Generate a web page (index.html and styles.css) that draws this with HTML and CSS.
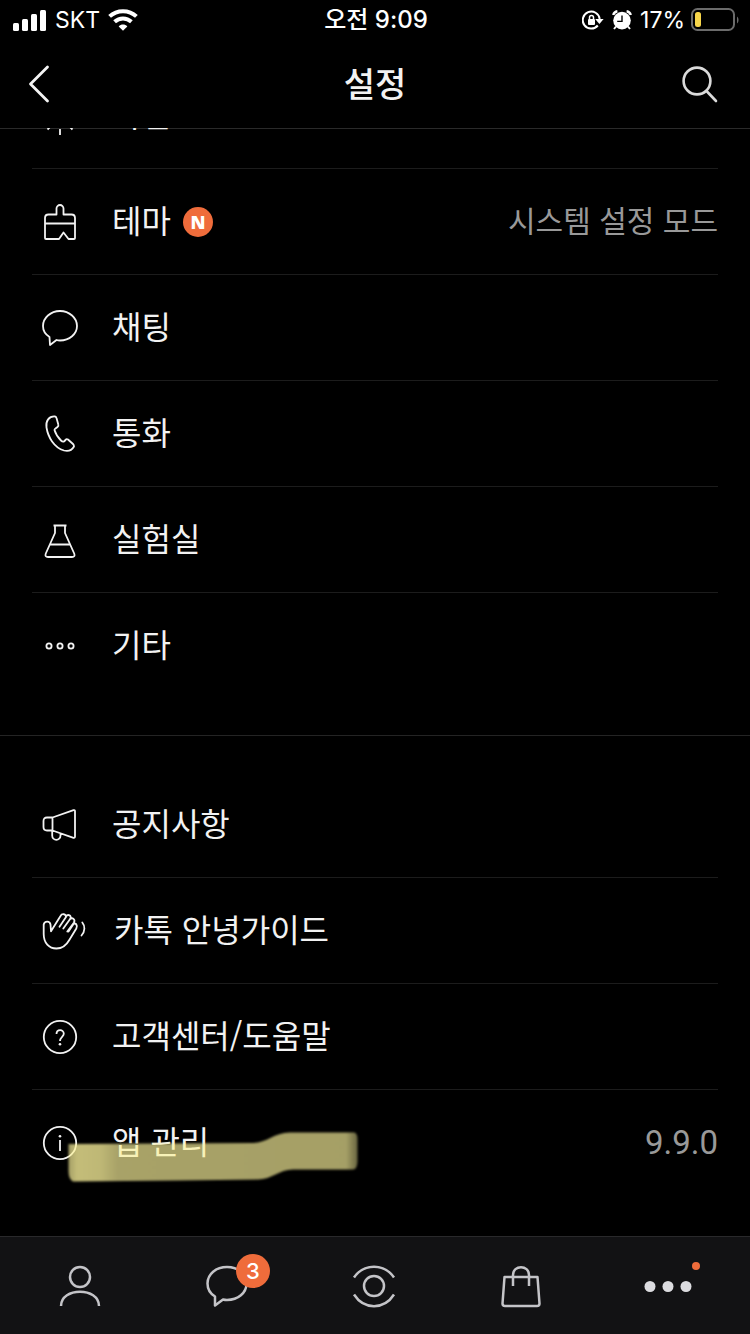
FILE: index.html
```html
<!DOCTYPE html>
<html lang="ko">
<head>
    <meta charset="UTF-8">
    <meta name="viewport" content="width=device-width, initial-scale=1.0">
    <title>설정</title>
    <link rel="stylesheet" href="styles.css">
</head>
<body>

<!-- Status bar -->
<div class="status-bar">
    <div class="status-left">
        <svg width="34" height="22" viewBox="0 0 34 22" fill="#fff">
            <rect x="0" y="14" width="6" height="8" rx="1.5"/>
            <rect x="9" y="10" width="6" height="12" rx="1.5"/>
            <rect x="18" y="5" width="6" height="17" rx="1.5"/>
            <rect x="27" y="1" width="6" height="21" rx="1.5"/>
        </svg>
        <span>SKT</span>
        <svg width="30" height="22" viewBox="0 0 30 22" fill="none" stroke="#fff" stroke-width="4">
            <path d="M1.6 7.4C9 .4 21 .4 28.4 7.4"/>
            <path d="M6.6 12.8C11.5 8.4 18.5 8.4 23.4 12.8"/>
            <path d="M10.7 17.4C13 15 17 15 19.3 17.4L15 21.8z" fill="#fff" stroke="none"/>
        </svg>
    </div>
    <div class="status-time">오전 9:09</div>
    <div class="status-right">
        <svg width="22" height="20" viewBox="0 0 22 20" fill="none" stroke="#fff" stroke-width="2">
            <path d="M15.8 15.500A8.500 8.500 0 1 1 17.700 9"/>
            <path d="M13.200 9h8.400l-4.200 5z" fill="#fff" stroke="none"/>
            <rect x="6" y="9" width="7" height="6" rx="1" fill="#fff" stroke="none"/>
            <path d="M7.500 9V7.500a2 2 0 0 1 4 0V9" stroke-width="1.500"/>
        </svg>
        <svg width="20" height="20" viewBox="0 0 20 20">
            <g fill="none" stroke="#fff" stroke-width="2.400">
                <path d="M1.200 5C1.800 3 3.400 1.600 5.400 1.300M18.800 5C18.200 3 16.600 1.600 14.600 1.300"/>
                <path d="M4 16.500L2 19M16 16.500L18 19" stroke-width="2"/>
            </g>
            <circle cx="10" cy="10.600" r="8.800" fill="#fff"/>
            <path d="M10 5.400v6H5.200" fill="none" stroke="#000" stroke-width="1.400"/>
        </svg>
        <span>17%</span>
        <svg class="battery" width="48" height="24" viewBox="0 0 48 24">
            <rect x="1" y="1" width="42" height="21" rx="5.500" fill="none" stroke="#6b6b6b" stroke-width="2"/>
            <rect x="4" y="4" width="6" height="15" rx="2.500" fill="#f8d64a"/>
            <path d="M46 8.500v7c2-1.400 2-5.600 0-7z" fill="#6b6b6b"/>
        </svg>
    </div>
</div>

<header class="header">
    <button class="header-btn" type="button" aria-label="뒤로">
        <svg width="24" height="40" viewBox="1 0 24 40" fill="none" stroke="#f4f4f4" stroke-width="2.800" stroke-linecap="round" stroke-linejoin="round">
            <path d="M20.500 3L3.500 20L20.500 37"/>
        </svg>
    </button>
    <h1>설정</h1>
    <button class="header-btn" type="button" aria-label="검색">
        <svg width="40" height="38" viewBox="0 0 40 38" fill="none" stroke="#dadada" stroke-width="2.600" stroke-linecap="round">
            <circle cx="15" cy="16" r="13.400"/>
            <path d="M24.500 26L34 36"/>
        </svg>
    </button>
</header>

<main class="content">
    <section class="group group-scrolled">
        <a class="row" href="#">
            <svg class="icon" viewBox="0 0 36 36">
                <circle cx="18" cy="18" r="8"/>
                <path d="M18 0v5M18 31v6M0 18h5M31 18h5M5.500 5.500l3 3M27 28l3.500 3.500M5.500 31.500l3.500-3.500M27.500 8.500l3-3"/>
            </svg>
            <span class="label">화면</span>
        </a>
        <a class="row" href="#">
            <svg class="icon" viewBox="0 0 36 36">
                <path d="M14.500 10.500V4.500a3.500 3.500 0 0 1 7 0V10.500H29.500q3.500 0 3.500 3.500V34q0 1-1 1H26.500L21.500 28.500L17 35H4q-1 0-1-1V14q0-3.500 3.500-3.500zM3 19.500H33"/>
            </svg>
            <span class="label">테마</span>
            <span class="badge-new">N</span>
            <span class="value">시스템 설정 모드</span>
        </a>
        <a class="row" href="#">
            <svg class="icon" viewBox="0 0 36 36">
                <path d="M7.500 27C3.500 24.500 1 20.500 1 16C1 8 8.500 1 18 1S35 8 35 16S27.500 30.500 18 30.500Q16 30.500 14.500 30L8 35z"/>
            </svg>
            <span class="label">채팅</span>
        </a>
        <a class="row" href="#">
            <svg class="icon" viewBox="0 1 36 36">
                <path d="M13 1.500C7 1 3.500 6 4.500 12.500C6 22 12 32.500 22 35.500C26 36.500 30 35 32 31.500Q32 30 31 29L26 24.500Q24.500 23.500 23.500 25L22 26.500Q20.500 27 19 25.500C15.500 22 13.500 18.500 12.500 15Q12.500 14 13.500 13.500L15.500 12Q16.800 11 16.300 9.500L14.500 3Q14.200 1.600 13 1.500z"/>
            </svg>
            <span class="label">통화</span>
        </a>
        <a class="row" href="#">
            <svg class="icon" viewBox="0 -2 36 36">
                <path d="M11.500 1.500H24.500M13 1.500V9L3.800 29.500Q2.500 33 6 33H30Q33.500 33 32.200 29.500L23 9V1.500M8 20.500H28"/>
            </svg>
            <span class="label">실험실</span>
        </a>
        <a class="row" href="#">
            <svg class="icon" viewBox="0 0 36 36">
                <circle cx="7" cy="18" r="2.600"/>
                <circle cx="18" cy="18" r="2.600"/>
                <circle cx="29" cy="18" r="2.600"/>
            </svg>
            <span class="label">기타</span>
        </a>
    </section>

    <section class="group">
        <a class="row" href="#">
            <svg class="icon" viewBox="0 1 36 36">
                <path d="M10.500 11.500L31.500 4.200Q33 3.800 33 5.200V30.500Q33 32.200 31.500 31.800L10.500 24.500M10.500 11.500V24.500M10.500 11.500H5Q1.500 11.500 1.500 15V21Q1.500 24.500 5 24.500H10.500M10.200 24.500V29.500C10.200 35.200 18.500 35.200 18.500 29.500V27.400"/>
            </svg>
            <span class="label">공지사항</span>
        </a>
        <a class="row" href="#">
            <svg class="icon icon-wide" viewBox="0 0 44 36">
                <path d="M9 18.200L8.500 11.500C7.800 7.500 2.500 7.800 1.700 11.500V21C1.700 30 7 35.500 14.500 35.500C20.500 35.500 24.500 32 27.300 27L34.300 15.500C36 12 33.500 9.500 31.500 11L26.500 18.500M9 18.200L18.500 3C20 .2 24 .8 24 4L17.500 13.800M24 3.500C26 .5 30 2.800 28.300 5.800L21.300 15.500M28 6C30.500 4 33.500 6.500 32 9.500L25.300 18.500"/>
                <path d="M40.300 9.500C43.200 13 43.200 18.500 39.500 22.500"/>
            </svg>
            <span class="label">카톡 안녕가이드</span>
        </a>
        <a class="row" href="#">
            <svg class="icon" viewBox="0 0 36 36">
                <circle cx="18" cy="18" r="16.200"/>
                <path d="M14.500 15C14.500 10 21.800 10 21.800 14.700C21.800 17.700 18 18 18 22"/>
                <circle class="dot" cx="18" cy="25.300" r="1.300"/>
            </svg>
            <span class="label">고객센터/도움말</span>
        </a>
        <a class="row" href="#">
            <svg class="icon" viewBox="0 0 36 36">
                <circle cx="18" cy="18" r="16.200"/>
                <path d="M18 15V26"/>
                <circle class="dot" cx="18" cy="11.300" r="1.300"/>
            </svg>
            <span class="label">앱 관리</span>
            <span class="value value-version">9.9.0</span>
            <!-- highlighter stroke -->
            <svg class="marker" viewBox="0 0 290 51">
                <defs>
                    <linearGradient id="ink">
                        <stop offset="0" stop-color="#fbf29b" stop-opacity=".66"/>
                        <stop offset=".03" stop-color="#fbf29b" stop-opacity=".78"/>
                        <stop offset=".11" stop-color="#fbf29b" stop-opacity=".76"/>
                        <stop offset=".17" stop-color="#fbf29b" stop-opacity=".67"/>
                        <stop offset=".96" stop-color="#fbf29b" stop-opacity=".66"/>
                        <stop offset="1" stop-color="#fbf29b" stop-opacity=".42"/>
                    </linearGradient>
                </defs>
                <path d="M.5 13L185 12C199 12 206 1.500 222 1.500H286Q289.500 2 289.500 8V31Q289 38.500 285 38.500H225C211 38.500 204 48.500 190 48.500L110 49.500L5 50.500Q.5 48 .5 40z" fill="url(#ink)"/>
            </svg>
        </a>
    </section>
</main>

<nav class="tab-bar">
    <a class="tab" href="#" aria-label="친구">
        <svg width="44" height="44" viewBox="0 0 44 44">
            <circle cx="22" cy="13" r="10"/>
            <path d="M3 42C3 23 41 23 41 42"/>
        </svg>
    </a>
    <a class="tab" href="#" aria-label="채팅">
        <span class="tab-icon">
            <svg width="44" height="44" viewBox="0 0 44 44">
                <path d="M10 32.500C5 29.500 2.500 25 2.500 19.500C2.500 10 11 3 22 3S41.500 10 41.500 19.500S33 36 22 36Q20 36 18 35.500L10 41.500z"/>
            </svg>
            <span class="badge-count">3</span>
        </span>
    </a>
    <a class="tab" href="#" aria-label="뷰">
        <svg width="44" height="44" viewBox="0 0 44 44">
            <circle cx="22" cy="22" r="10"/>
            <path d="M2 13.500C12-1 32-1 42 13.500M2 30.500C12 46 32 46 42 30.500"/>
        </svg>
    </a>
    <a class="tab" href="#" aria-label="쇼핑">
        <svg width="44" height="44" viewBox="0 0 44 44">
            <path d="M5.500 13H38.500L40.500 39.500Q40.500 42 38 42H6Q3.500 42 3.500 39.500zM14 22V11C14 .5 30 .5 30 11V22"/>
        </svg>
    </a>
    <a class="tab" href="#" aria-label="더보기">
        <span class="tab-icon">
            <svg class="tab-more" width="52" height="44" viewBox="0 0 52 44">
                <circle cx="8" cy="22.500" r="5.500"/>
                <circle cx="26" cy="22.500" r="5.500"/>
                <circle cx="44" cy="22.500" r="5.500"/>
            </svg>
            <span class="badge-dot"></span>
        </span>
    </a>
</nav>

</body>
</html>
```
FILE: styles.css
```css
* {
    box-sizing: border-box;
}
body {
    margin: 0;
    height: 100vh;
    display: flex;
    flex-direction: column;
    overflow: hidden;
    background: #000;
    color: #f2f2f2;
    font-family: "Noto Sans CJK KR", sans-serif;
}
svg {
    display: block;
    flex-shrink: 0;
}
a {
    color: inherit;
    text-decoration: none;
}

/* Status bar */
.status-bar {
    height: 40px;
    padding: 0 11px 0 13px;
    display: grid;
    grid-template-columns: 1fr auto 1fr;
    align-items: center;
    color: #fff;
    font-family: Inter, "Noto Sans CJK KR", sans-serif;
    font-size: 23px;
    line-height: 40px;
}
.status-left, .status-right {
    display: flex;
    align-items: center;
    gap: 8px;
}
.status-right {
    justify-content: flex-end;
}
.battery {
    margin-left: -2px;
}
.status-time {
    font-size: 24px;
    font-weight: 500;
}

/* Header */
.header {
    height: 89px;
    padding: 0 28px;
    display: grid;
    grid-template-columns: 1fr auto 1fr;
    align-items: center;
    border-bottom: 1px solid #2a2a2a;
}
.header h1 {
    margin: 0;
    padding-bottom: 2px;
    font-size: 34px;
    line-height: 48px;
    font-weight: 500;
}
.header-btn {
    padding: 0;
    border: none;
    background: none;
    cursor: pointer;
}
.header-btn:last-child {
    justify-self: end;
}
.header-btn:first-child {
    justify-self: start;
}

/* List */
.content {
    flex: 1;
    min-height: 0;
    margin-top: -1px;
    overflow: hidden;
}
.group {
    padding: 36px 32px;
}
.group + .group {
    border-top: 1px solid #242424;
}
.group-scrolled {
    margin-top: -65px;
    padding-top: 0;
}
.row {
    position: relative;
    display: flex;
    align-items: center;
    height: 106px;
    padding-left: 10px;
    border-bottom: 1px solid #1c1c1c;
}
.row:last-child {
    border-bottom-color: transparent;
}
.icon {
    width: 36px;
    height: 36px;
    margin-right: 34px;
    overflow: visible;
    fill: none;
    stroke: #f2f2f2;
    stroke-width: 1.8;
    stroke-linejoin: round;
}
.icon-wide {
    width: 44px;
    margin-right: 28px;
    stroke-linecap: round;
}
.icon .dot {
    fill: #f2f2f2;
    stroke: none;
}
.label {
    padding-bottom: 6px;
    font-size: 32px;
    line-height: 48px;
}
.value {
    margin-left: auto;
    padding-bottom: 6px;
    color: #999;
    font-size: 30px;
    line-height: 48px;
}
.value-version {
    padding-bottom: 0;
    font-family: Roboto, sans-serif;
    font-size: 33px;
}
.badge-new {
    width: 30px;
    margin-left: 12px;
    border-radius: 50%;
    background: #ef6c3b;
    color: #fff;
    font-family: "Open Sans", sans-serif;
    font-size: 18px;
    line-height: 30px;
    font-weight: 800;
    text-align: center;
}
.marker {
    position: absolute;
    left: 36px;
    top: 41px;
    width: 290px;
    height: 51px;
    filter: blur(1px);
}

/* Bottom tabs */
.tab-bar {
    height: 98px;
    padding: 0 8px 0 6px;
    display: flex;
    border-top: 1px solid #29292b;
    background: #121214;
}
.tab {
    flex: 1;
    display: flex;
    align-items: center;
    justify-content: center;
}
.tab svg {
    fill: none;
    stroke: #c4c4c8;
    stroke-width: 2.5;
    stroke-linejoin: round;
}
.tab .tab-more {
    fill: #dcdce0;
    stroke: none;
}
.tab-icon {
    position: relative;
}
.badge-count {
    position: absolute;
    top: -10px;
    right: -21px;
    width: 34px;
    border-radius: 50%;
    background: #ef6c3b;
    color: #fff;
    font-family: Inter, sans-serif;
    font-size: 22px;
    line-height: 34px;
    font-weight: 500;
    text-align: center;
}
.badge-dot {
    position: absolute;
    top: -2px;
    right: -6px;
    width: 8px;
    height: 8px;
    border-radius: 50%;
    background: #ef6c3b;
}
```
